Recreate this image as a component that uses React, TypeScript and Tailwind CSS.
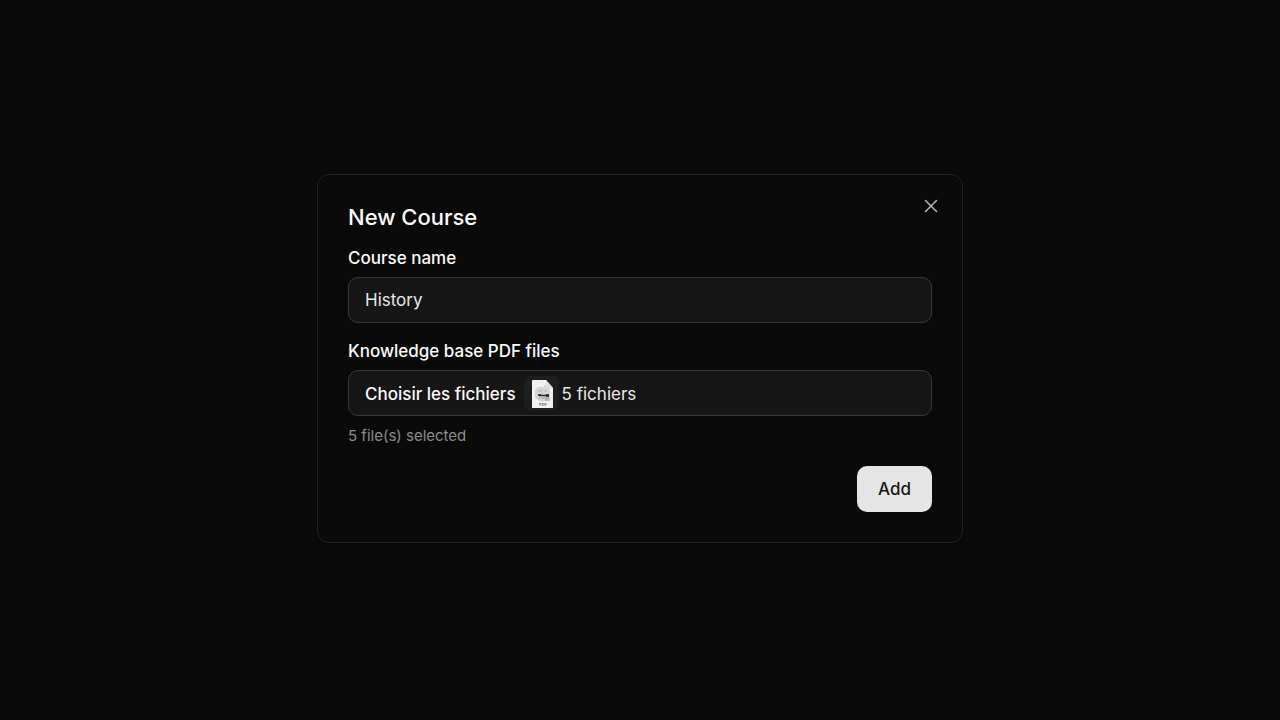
import React, { useState } from 'react';
import { X } from 'lucide-react';

const labelClass = 'block text-[17px] leading-6 font-medium text-neutral-50';
const fieldClass =
  'h-[46px] w-full rounded-[10px] border border-[#383838] bg-[#161616] px-4 text-[17px] leading-6 text-[#e8e8e8]';

const PdfThumbnail: React.FC = () => (
  <span className="flex h-[34px] w-[35px] items-center justify-end rounded-md bg-[#1e1e1e] pt-[2px] pr-[5px]">
    <svg width="22" height="28" viewBox="0 0 22 28" aria-hidden="true">
      <path d="M1 0h13l7 8v20H0V1a1 1 0 0 1 1-1z" fill="#f1f1f1" />
      <path d="M14 0l7 8h-7z" fill="#dedede" />
      <path d="M13 5v4h5" fill="none" stroke="#c2c2c2" strokeWidth="1" />
      <path d="M6 7h7l2 3h3v9l-4 2H7l-4-4v-7z" fill="#d6d6d6" />
      <path d="M6 11h4M12 11h3M6 18h5" stroke="#b0b0b0" strokeWidth="1" />
      <path d="M6 14h3v2H6zM14 14h3v3h-3z" fill="#4a4a4a" />
      <path d="M7 15.500h10" stroke="#2a2a2a" strokeWidth="1.500" />
      <path d="M11 18h6M13 20h5" stroke="#8f8f8f" strokeWidth="1" />
      <text x="11" y="26" textAnchor="middle" fontSize="4" fontWeight="700" fill="#777777">
        PDF
      </text>
    </svg>
  </span>
);

export default function App() {
  const [courseName, setCourseName] = useState('History');
  const [fileCount, setFileCount] = useState(5);

  return (
    <main className="flex min-h-screen items-center justify-center bg-[#0a0a0a] px-4 pb-[3px] font-['Inter',sans-serif]">
      <div
        role="dialog"
        aria-labelledby="dialog-title"
        className="relative w-full max-w-[646px] rounded-xl border border-[#222222] bg-[#0a0a0a] p-[30px] shadow-lg"
      >
        <button
          type="button"
          aria-label="Close"
          className="absolute top-5 right-5 flex h-[22px] w-[22px] items-center justify-center text-[#b0b0b0]"
        >
          <X size={22} strokeWidth={1.75} />
        </button>

        <h2 id="dialog-title" className="text-[22px] leading-6 font-medium text-neutral-50">
          New Course
        </h2>

        <form className="mt-[17px]" onSubmit={(e) => e.preventDefault()}>
          <label htmlFor="course-name" className={labelClass}>
            Course name
          </label>
          <input
            id="course-name"
            type="text"
            value={courseName}
            onChange={(e) => setCourseName(e.target.value)}
            className={`mt-[7px] block outline-none ${fieldClass}`}
          />

          <label htmlFor="course-files" className={`mt-4 ${labelClass}`}>
            Knowledge base PDF files
          </label>
          <label
            htmlFor="course-files"
            className={`relative mt-[7px] flex cursor-pointer items-center ${fieldClass}`}
          >
            <input
              id="course-files"
              type="file"
              accept="application/pdf"
              multiple
              onChange={(e) => setFileCount(e.target.files?.length ?? 0)}
              className="sr-only"
            />
            <span className="mr-2 pt-[2px] font-medium text-neutral-50">Choisir les fichiers</span>
            <PdfThumbnail />
            <span className="ml-[3px] pt-[2px]">{fileCount} fichiers</span>
          </label>
          <p className="mt-[10px] text-[15px] leading-5 text-[#8c8c8c]">{fileCount} file(s) selected</p>

          <div className="mt-5 flex justify-end">
            <button
              type="submit"
              className="h-[46px] rounded-[10px] bg-[#e5e5e5] px-[21px] text-[17px] leading-6 font-medium text-[#171717]"
            >
              Add
            </button>
          </div>
        </form>
      </div>
    </main>
  );
}
